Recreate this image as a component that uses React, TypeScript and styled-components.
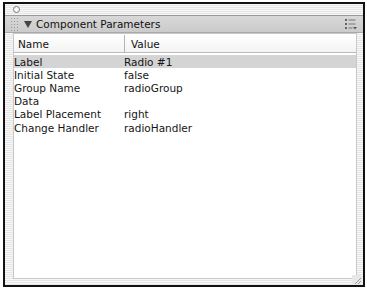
import React from 'react'
import styled, { createGlobalStyle } from 'styled-components'

const Global = createGlobalStyle`
  body {
    margin: 0;
    background: #ffffff;
    font-family: "DejaVu Sans", Verdana, sans-serif;
  }
`

const Page = styled.div`
  width: 367px;
  height: 290px;
  padding: 2px 2px 3px 3px;
  box-sizing: border-box;
`

const Frame = styled.div`
  width: 362px;
  height: 285px;
  box-sizing: border-box;
  border: 2px solid #111;
  background: #f4f4f4;
  display: flex;
  flex-direction: column;
`

const stripes = `repeating-linear-gradient(180deg, #f7f7f7 0px, #f7f7f7 1px, #e6e6e6 1px, #e6e6e6 2px)`

const TitleStrip = styled.div`
  height: 11px;
  flex: none;
  background: ${stripes};
  display: flex;
  align-items: center;
  padding-left: 8px;
`

const Dot = styled.span`
  width: 5px;
  height: 5px;
  border-radius: 50%;
  border: 1px solid #777;
  background: #fafafa;
`

const PanelHeader = styled.div`
  height: 16px;
  flex: none;
  display: flex;
  align-items: center;
  background: linear-gradient(180deg, #d8d8d8 0%, #cbcbcb 100%);
  border-top: 1px solid #9a9a9a;
  border-bottom: 1px solid #a8a8a8;
  font-size: 10.5px;
  color: #111;
`

const Grip = styled.span`
  width: 8px;
  height: 14px;
  margin-left: 5px;
  background-image: radial-gradient(circle, #999 0.7px, transparent 1px);
  background-size: 3px 3px;
`

const Triangle = styled.span`
  width: 0;
  height: 0;
  margin-left: 6px;
  margin-right: 4px;
  border-left: 4px solid transparent;
  border-right: 4px solid transparent;
  border-top: 7px solid #444;
`

const Title = styled.span`
  flex: 1;
`

const MenuIcon = styled.svg`
  margin-right: 6px;
`

const Body = styled.div`
  flex: 1;
  display: flex;
  padding-bottom: 6px;
  background: ${stripes};
`

const Gutter = styled.div<{ $w: number }>`
  width: ${p => p.$w}px;
  flex: none;
`

const Table = styled.div`
  flex: 1;
  background: #fff;
  border: 1px solid #c8c8c8;
  display: flex;
  flex-direction: column;
  position: relative;
`

const HeaderRow = styled.div`
  height: 17px;
  display: grid;
  grid-template-columns: 110px 1fr;
  margin-top: 1px;
  border-bottom: 1px solid #bdbdbd;
  background: linear-gradient(180deg, #ffffff 0%, #f3f3f3 100%);
  font-size: 10.5px;
  color: #111;
  margin-bottom: 2px;
`

const HeadCell = styled.div<{ $first?: boolean }>`
  display: flex;
  align-items: center;
  padding-left: ${p => (p.$first ? 4 : 6)}px;
  border-left: ${p => (p.$first ? 'none' : '1px solid #b4b4b4')};
`

const Row = styled.div<{ $selected?: boolean }>`
  height: 13.2px;
  display: grid;
  grid-template-columns: 110px 1fr;
  align-items: center;
  background: ${p => (p.$selected ? '#d4d4d4' : 'transparent')};
  font-size: 10.5px;
  color: #151515;
  &:first-of-type {
    height: 14px;
  }
`

const Cell = styled.span`
  white-space: nowrap;
`

const ResizeGrip = styled.svg`
  position: absolute;
  right: -6px;
  bottom: -7px;
`

const rows: [string, string][] = [
  ['Label', 'Radio #1'],
  ['Initial State', 'false'],
  ['Group Name', 'radioGroup'],
  ['Data', ''],
  ['Label Placement', 'right'],
  ['Change Handler', 'radioHandler'],
]

export default function App() {
  return (
    <Page>
      <Global />
      <Frame>
        <TitleStrip>
          <Dot />
        </TitleStrip>
        <PanelHeader>
          <Grip />
          <Triangle />
          <Title>Component Parameters</Title>
          <MenuIcon width="12" height="11" viewBox="0 0 12 11">
            <rect x="0" y="0" width="2" height="2" fill="#666" />
            <rect x="0" y="4" width="2" height="2" fill="#666" />
            <rect x="0" y="8" width="2" height="2" fill="#666" />
            <rect x="3.5" y="0.5" width="7" height="1" fill="#777" />
            <rect x="3.5" y="4.5" width="7" height="1" fill="#777" />
            <rect x="3.5" y="8.5" width="4" height="1" fill="#777" />
            <path d="M8 8 L12 8 L10 10.5 Z" fill="#555" />
          </MenuIcon>
        </PanelHeader>
        <Body>
          <Gutter $w={8} />
          <Table>
            <HeaderRow>
              <HeadCell $first>Name</HeadCell>
              <HeadCell>Value</HeadCell>
            </HeaderRow>
            {rows.map(([name, value], i) => (
              <Row key={name} $selected={i === 0}>
                <Cell>{name}</Cell>
                <Cell>{value}</Cell>
              </Row>
            ))}
            <ResizeGrip width="10" height="10" viewBox="0 0 10 10">
              <rect x="0" y="0" width="10" height="10" fill="#e8e8e8" />
              <path d="M3 9 L9 3 M6 9 L9 6" stroke="#999" strokeWidth="1" />
            </ResizeGrip>
          </Table>
          <Gutter $w={6} />
        </Body>
      </Frame>
    </Page>
  )
}
